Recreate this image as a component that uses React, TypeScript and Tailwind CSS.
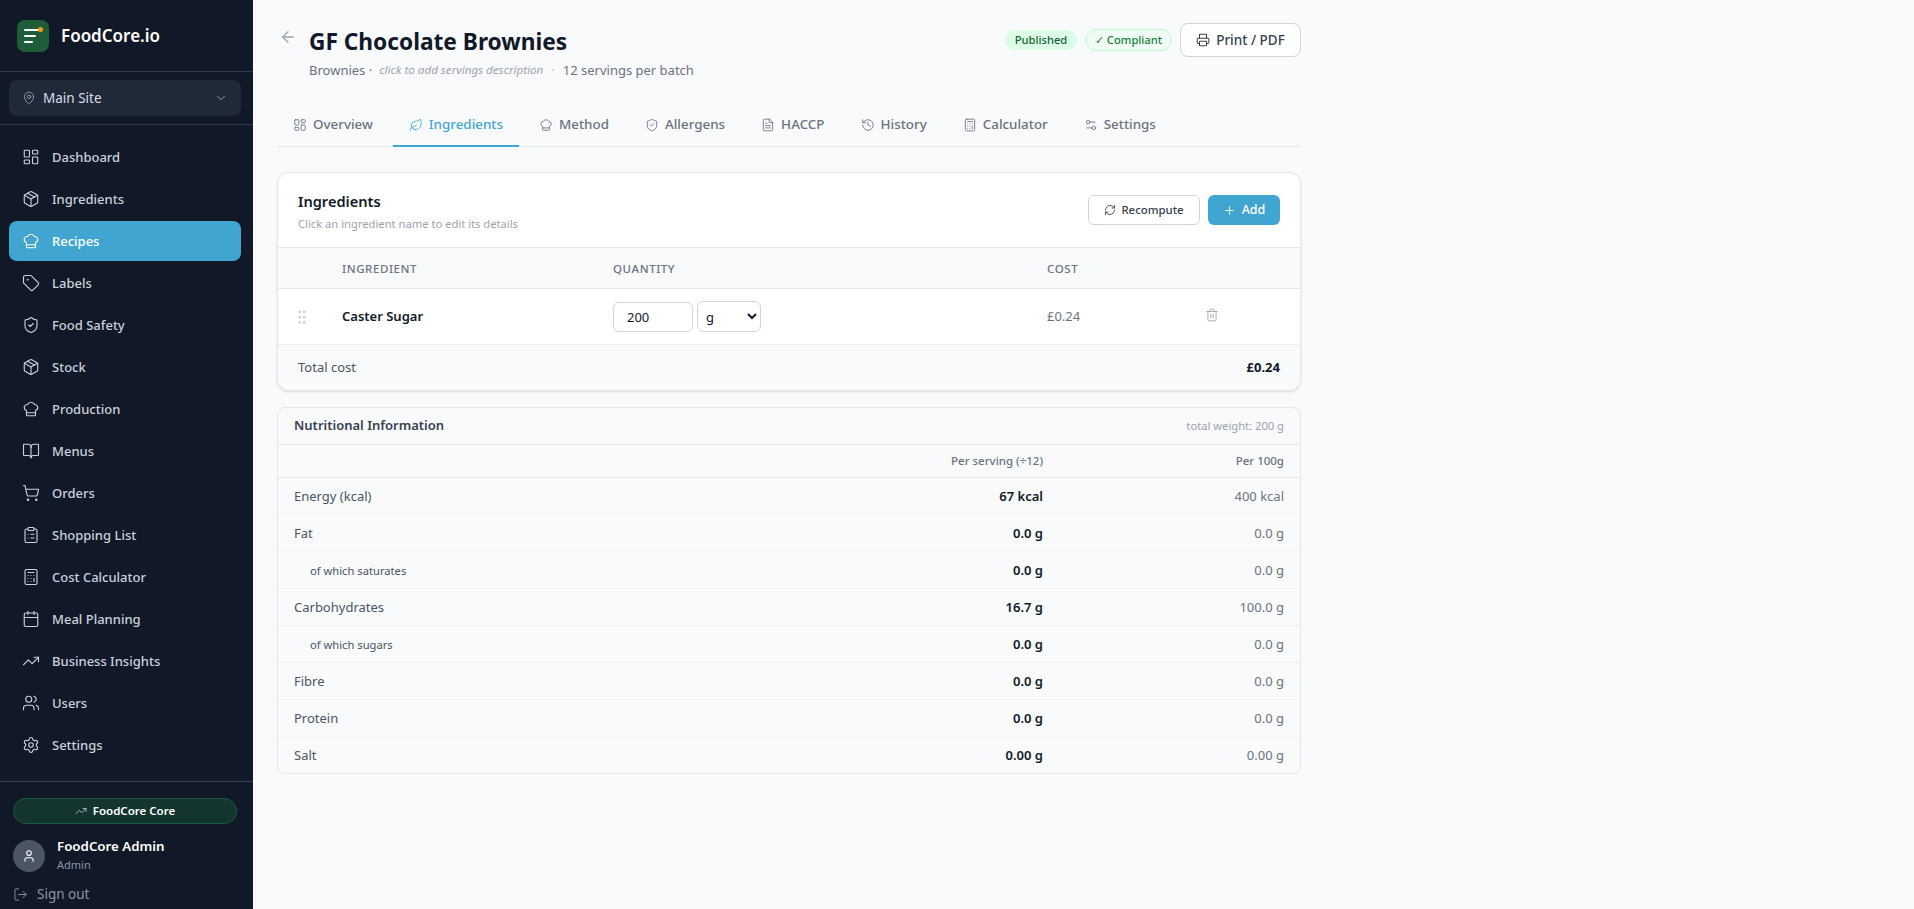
import {
  ArrowLeft, BookOpen, Calculator, Calendar, ChefHat, ChevronDown, ClipboardList, FileText, GripVertical,
  History, LayoutDashboard, Leaf, LogOut, MapPin, Package, Plus, Printer, RefreshCw, Settings, Settings2,
  ShieldCheck, ShoppingCart, Tag, Trash2, TrendingUp, User, Users,
} from 'lucide-react'

const navItems = [
  { label: 'Dashboard', icon: LayoutDashboard },
  { label: 'Ingredients', icon: Package },
  { label: 'Recipes', icon: ChefHat, active: true },
  { label: 'Labels', icon: Tag },
  { label: 'Food Safety', icon: ShieldCheck },
  { label: 'Stock', icon: Package },
  { label: 'Production', icon: ChefHat },
  { label: 'Menus', icon: BookOpen },
  { label: 'Orders', icon: ShoppingCart },
  { label: 'Shopping List', icon: ClipboardList },
  { label: 'Cost Calculator', icon: Calculator },
  { label: 'Meal Planning', icon: Calendar },
  { label: 'Business Insights', icon: TrendingUp },
  { label: 'Users', icon: Users },
  { label: 'Settings', icon: Settings },
]

const tabs = [
  { label: 'Overview', icon: LayoutDashboard },
  { label: 'Ingredients', icon: Leaf, active: true },
  { label: 'Method', icon: ChefHat },
  { label: 'Allergens', icon: ShieldCheck },
  { label: 'HACCP', icon: FileText },
  { label: 'History', icon: History },
  { label: 'Calculator', icon: Calculator },
  { label: 'Settings', icon: Settings2 },
]

const nutrition = [
  { label: 'Energy (kcal)', serving: '67 kcal', per100: '400 kcal' },
  { label: 'Fat', serving: '0.0 g', per100: '0.0 g' },
  { label: 'of which saturates', serving: '0.0 g', per100: '0.0 g', sub: true },
  { label: 'Carbohydrates', serving: '16.7 g', per100: '100.0 g' },
  { label: 'of which sugars', serving: '0.0 g', per100: '0.0 g', sub: true },
  { label: 'Fibre', serving: '0.0 g', per100: '0.0 g' },
  { label: 'Protein', serving: '0.0 g', per100: '0.0 g' },
  { label: 'Salt', serving: '0.00 g', per100: '0.00 g' },
]

function Sidebar() {
  return (
    <aside className="w-[253px] h-[909px] shrink-0 flex flex-col bg-[#111827]">
      <div className="h-[72px] flex items-center gap-3 pl-[17px] border-b border-[#2d3645]">
        <div className="relative w-8 h-8 rounded-lg bg-[#1f5c3a] flex flex-col justify-center gap-[4px] pl-[7px]">
          <span className="block w-[15px] h-[2px] bg-white rounded" />
          <span className="block w-[12px] h-[2px] bg-white rounded" />
          <span className="block w-[9px] h-[2px] bg-white rounded" />
          <span className="absolute top-[7px] right-[6px] w-[5px] h-[5px] rounded-full bg-[#f59e0b]" />
        </div>
        <span className="text-[17px] font-semibold text-white">FoodCore.io</span>
      </div>
      <div className="h-[53px] pl-[9px] pr-[12px] flex items-center border-b border-[#2d3645]">
        <div className="w-full h-9 rounded-lg bg-[#1f2937] flex items-center pl-[13px] pr-[13px] gap-[7px]">
          <MapPin className="w-[14px] h-[14px] text-[#9ca3af]" strokeWidth={1.5} />
          <span className="flex-1 text-[13.5px] pt-px text-[#d8dee9]">Main Site</span>
          <ChevronDown className="w-[14px] h-[14px] text-[#9ca3af]" strokeWidth={1.5} />
        </div>
      </div>
      <nav className="flex-1 flex flex-col gap-[2px] pl-[9px] pr-[12px] pt-[12px]">
        {navItems.map((item) => (
          <div
            key={item.label}
            className={`h-10 rounded-lg flex items-center gap-[12px] pl-[13px] text-[13px] font-medium ${
              item.active ? 'bg-[#40a6d1] text-white' : 'text-[#c9d1dc]'
            }`}
          >
            <item.icon className="w-[18px] h-[18px]" strokeWidth={1.5} />
            <span className="pt-[2px]">{item.label}</span>
          </div>
        ))}
      </nav>
      <div className="border-t border-[#374151] h-[128px] px-[13px] pt-4">
        <div className="h-[26px] w-[224px] rounded-full bg-[#14352f] border border-[#1b5a3e] flex items-center justify-center gap-[6px] text-[11.5px] font-semibold text-white">
          <TrendingUp className="w-3 h-3 text-[#d1d5db]" strokeWidth={1.5} />
          FoodCore Core
        </div>
        <div className="flex items-center gap-3 mt-[14px]">
          <div className="w-8 h-8 rounded-full bg-[#4b5563] flex items-center justify-center">
            <User className="w-[14px] h-[14px] text-white" strokeWidth={1.75} />
          </div>
          <div className="-mt-[1px]">
            <div className="text-[13.3px] leading-[18px] font-semibold text-white">FoodCore Admin</div>
            <div className="text-[11px] leading-[19px] text-[#8b95a5]">Admin</div>
          </div>
        </div>
        <div className="flex items-center gap-[9px] mt-[10px] text-[13.5px] leading-[20px] text-[#8b95a5]">
          <LogOut className="w-[15px] h-[15px]" strokeWidth={1.5} />
          Sign out
        </div>
      </div>
    </aside>
  )
}

function PageHeader() {
  return (
    <>
      <div className="flex items-start justify-between h-[102px] pt-[23px]">
        <div className="flex items-start">
          <ArrowLeft className="w-[18px] h-[18px] mt-[5px] ml-[2px] mr-[12px] text-[#9ca3af]" strokeWidth={1.75} />
          <div>
            <h1 className="text-[22.7px] leading-[38px] font-bold text-[#111827]">GF Chocolate Brownies</h1>
            <div className="flex items-center text-[13px] leading-[20px] text-[#6b7280] -mt-[1px]">
              <span>Brownies ·</span>
              <span className="ml-[7px] text-[11.6px] italic text-[#9ca3af]">click to add servings description</span>
              <span className="mx-[8px] text-[#c4c8ce]">·</span>
              <span>12 servings per batch</span>
            </div>
          </div>
        </div>
        <div className="flex items-center gap-[8px]">
          <span className="h-[20px] w-[72px] rounded-full bg-[#dcfce7] flex items-center justify-center text-[11.2px] font-medium text-[#166534]">
            Published
          </span>
          <span className="h-[22px] w-[87px] rounded-full bg-[#f0fdf4] border border-[#bbf7d0] flex items-center justify-center text-[11.2px] font-medium text-[#15803d]">
            ✓ Compliant
          </span>
          <button className="h-[34px] w-[121px] rounded-lg bg-white border border-[#d1d5db] flex items-center justify-center gap-[6px] text-[13.5px] font-medium text-[#374151]">
            <Printer className="w-[14px] h-[14px]" strokeWidth={1.75} />
            Print / PDF
          </button>
        </div>
      </div>
      <div className="flex gap-1 h-[45px] border-b border-[#e5e7eb]">
        {tabs.map((tab) => (
          <div
            key={tab.label}
            className={`h-[45px] pt-[2px] px-[16px] flex items-center gap-[6px] text-[13.4px] font-medium border-b-2 ${
              tab.active ? 'border-[#40a6d1] text-[#40a6d1]' : 'border-transparent text-[#6b7280]'
            }`}
          >
            <tab.icon className="w-[14px] h-[14px]" strokeWidth={1.5} />
            {tab.label}
          </div>
        ))}
      </div>
    </>
  )
}

function IngredientsCard() {
  const cols = 'grid grid-cols-[64px_271px_434px_159px_1fr] items-center'
  return (
    <section className="mt-[25px] h-[219px] rounded-xl border border-[#e5e7eb] bg-white shadow-sm overflow-hidden">
      <div className="h-[74px] flex items-start justify-between px-5 pt-[19px]">
        <div>
          <h2 className="text-[14.6px] leading-[18px] font-semibold text-[#111827]">Ingredients</h2>
          <p className="text-[11.2px] leading-[16px] mt-[6px] text-[#9ca3af]">Click an ingredient name to edit its details</p>
        </div>
        <div className="flex gap-[8px] mt-[3px]">
          <button className="h-[30px] w-[112px] rounded-md bg-white border border-[#d1d5db] flex items-center justify-center gap-[5px] text-[11.4px] font-medium text-[#374151]">
            <RefreshCw className="w-3 h-3" strokeWidth={1.75} />
            Recompute
          </button>
          <button className="h-[30px] w-[72px] rounded-md bg-[#40a6d1] flex items-center justify-center gap-[6px] text-[12.5px] font-medium text-white">
            <Plus className="w-[13px] h-[13px]" strokeWidth={1.75} />
            Add
          </button>
        </div>
      </div>
      <div className={`${cols} h-[42px] pt-px bg-[#f9fafb] border-y border-[#e5e7eb] text-[11.5px] font-medium tracking-wider text-[#6b7280] uppercase`}>
        <span />
        <span>Ingredient</span>
        <span>Quantity</span>
        <span className="col-span-2">Cost</span>
      </div>
      <div className={`${cols} h-[56px] border-b border-[#f0f1f3]`}>
        <GripVertical className="ml-[15px] w-[18px] h-[18px] text-[#d1d5db]" strokeWidth={2} />
        <span className="text-[13px] font-semibold text-[#111827]">Caster Sugar</span>
        <div className="flex items-center gap-[4px]">
          <input
            readOnly
            value="200"
            className="w-[80px] h-[30px] rounded-md border border-[#d1d5db] px-[13px] text-[13px] text-[#111827] bg-white"
          />
          <select className="w-[64px] h-[31px] rounded-md border border-[#d1d5db] px-[4px] text-[13px] text-[#111827] bg-white">
            <option>g</option>
          </select>
        </div>
        <span className="text-[13px] text-[#6b7280]">£0.24</span>
        <Trash2 className="w-[14px] h-[14px] -mt-[3px] -ml-px text-[#9ca3af]" strokeWidth={1.5} />
      </div>
      <div className="h-[45px] bg-[#f9fafb] flex items-center justify-between px-5 text-[13px]">
        <span className="text-[#4b5563]">Total cost</span>
        <span className="font-bold text-[#111827]">£0.24</span>
      </div>
    </section>
  )
}

function NutritionCard() {
  const cols = 'grid grid-cols-[1fr_200px_241px] items-center px-4'
  return (
    <section className="mt-[16px] rounded-lg border border-[#e5e7eb]">
      <div className="h-[37px] flex items-center justify-between px-4 border-b border-[#e5e7eb]">
        <h2 className="text-[13px] font-semibold text-[#374151]">Nutritional Information</h2>
        <span className="text-[11.2px] text-[#9ca3af]">total weight: 200 g</span>
      </div>
      <div className={`${cols} h-[33px] border-b border-[#e5e7eb] text-[11.5px] font-medium text-[#6b7280] text-right`}>
        <span />
        <span>Per serving (÷12)</span>
        <span>Per 100g</span>
      </div>
      {nutrition.map((row, i) => (
        <div
          key={row.label}
          className={`${cols} ${i < nutrition.length - 1 ? 'h-[37px] pt-[2px] border-b border-[#f3f4f6]' : 'h-[36px] pt-px'}`}
        >
          <span className={row.sub ? 'pl-4 text-[11.2px] text-[#4b5563]' : 'text-[13px] text-[#4b5563]'}>{row.label}</span>
          <span className="text-right text-[13px] font-semibold text-[#111827]">{row.serving}</span>
          <span className="text-right text-[13px] text-[#6b7280]">{row.per100}</span>
        </div>
      ))}
    </section>
  )
}

export default function App() {
  return (
    <div className="h-[909px] flex overflow-hidden bg-[#f9fafb] font-['Noto_Sans',sans-serif]">
      <Sidebar />
      <main className="flex-1 pl-6">
        <div className="w-[1024px]">
          <PageHeader />
          <IngredientsCard />
          <NutritionCard />
        </div>
      </main>
    </div>
  )
}
